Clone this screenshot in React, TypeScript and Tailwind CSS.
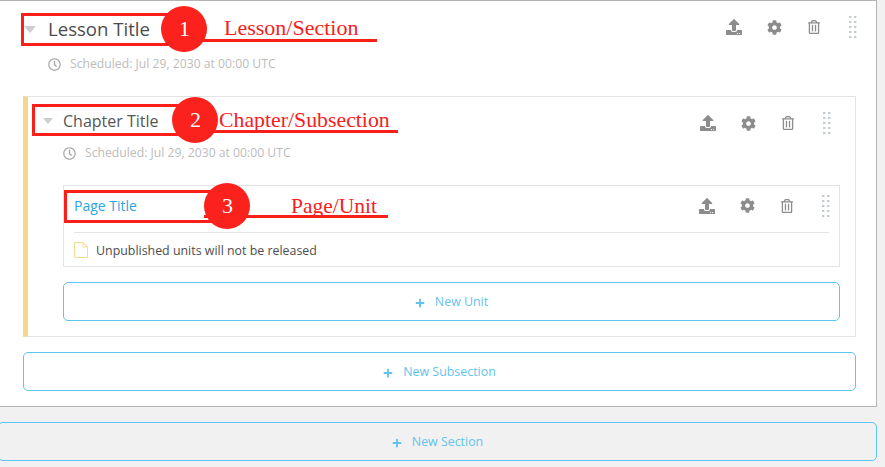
import { FaCog, FaPlus, FaRegClock, FaUpload, FaRegTrashAlt } from "react-icons/fa";

function Dots() {
  return (
    <svg width="8" height="22" viewBox="0 0 8 22" className="block">
      {[0, 5, 10, 15, 20].map((y) => (
        <g key={y} fill="#c3cad4">
          <rect x="0" y={y} width="2.4" height="2" />
          <rect x="5" y={y} width="2.4" height="2" />
        </g>
      ))}
    </svg>
  );
}

function Actions({ className }: { className: string }) {
  return (
    <div className={`flex items-center text-[#8c8c8c] ${className}`}>
      <span className="flex w-10 justify-center"><FaUpload size={16} /></span>
      <span className="flex w-10 justify-center"><FaCog size={15} /></span>
      <span className="flex w-10 justify-center"><FaRegTrashAlt size={14} /></span>
      <span className="ml-[15px] flex w-2 justify-center"><Dots /></span>
    </div>
  );
}

function Caret({ className }: { className: string }) {
  return (
    <svg viewBox="0 0 12 7" className={`block shrink-0 ${className}`}>
      <path d="M0 0H12L6 7Z" fill="#cdcdcd" />
    </svg>
  );
}

function Schedule({ className }: { className: string }) {
  return (
    <div className={`flex items-center text-[12.200px] leading-4 text-[#bcbcbc] ${className}`}>
      <FaRegClock size={13} className="mr-[9px] shrink-0 text-[#a8a8a8]" />
      <span>Scheduled: Jul 29, 2030 at 00:00 UTC</span>
    </div>
  );
}

function AddButton({ label, className }: { label: string; className: string }) {
  return (
    <div className={`flex items-center justify-center gap-[10px] rounded-[5px] border border-solid border-[#5cc6f0]! pt-[2px] text-[12.400px] text-[#62c4ec] ${className}`}>
      <FaPlus size={10} />
      <span>{label}</span>
    </div>
  );
}

function Annotation({ n, box, circle, line, label }: {
  n: string;
  box: string;
  circle: string;
  line: string;
  label: { text: string; cls: string };
}) {
  return (
    <>
      <div className={`absolute border-[3px] border-[#fb1f1a] ${box}`} />
      <div className={`absolute h-[3px] bg-[#fb1f1a] ${line}`} />
      <div className={`absolute flex h-[46px] w-[46px] items-center justify-center rounded-full bg-[#fb211c] pb-[2px] pl-px font-['Liberation_Serif',serif] text-[22px] text-white ${circle}`}>{n}</div>
      <div className={`absolute whitespace-nowrap font-['Liberation_Serif',serif] leading-7 text-[#f5211c] ${label.cls}`}>{label.text}</div>
    </>
  );
}

export default function App() {
  return (
    <div
      className="relative h-[467px] w-[885px] overflow-hidden bg-[#f1f1f1]"
      style={{ fontFamily: '"Open Sans", sans-serif' }}
    >
      <section className="h-[407px] w-[877px] border-y border-r border-[#b4b4b4] bg-white pl-[23px] pr-5">
        <div className="h-[95px] pt-[16px]">
          <div className="flex h-[24px] items-center">
            <Caret className="ml-px mr-[12px] h-[7px] w-3" />
            <h1 className="text-[18.600px] leading-6 text-[#4c4c4c]">Lesson Title</h1>
            <Actions className="ml-auto mr-[-1px] -translate-y-[2px]" />
          </div>
          <Schedule className="ml-[25px] mt-[15px]" />
        </div>

        <div className="h-[241px] border border-l-[5px] border-[#e3e3e3] border-l-[#f6d68d] pl-[35px] pr-[15px]">
          <div className="h-[88px] pt-[12px]">
            <div className="flex h-6 items-center">
              <Caret className="ml-[-20px] mr-[10px] h-[6px] w-[10px]" />
              <h2 className="text-[16px] leading-6 text-[#555555]">Chapter Title</h2>
              <Actions className="ml-auto mr-[9px] translate-y-[2px]" />
            </div>
            <Schedule className="mt-[12px]" />
          </div>

          <div className="h-[82px] border border-[#e3e3e3] px-[10px]">
            <div className="flex h-[47px] items-center border-b border-[#e3e3e3] pb-[7px]">
              <span className="text-[14px] text-[#2ba6e0]">Page Title</span>
              <Actions className="ml-auto mr-[-1px]" />
            </div>
            <div className="flex h-[33px] items-center">
              <svg width="14" height="16" viewBox="0 0 14 16" className="mr-2 block shrink-0">
                <path d="M.5.5H9L13.500 5V15.500H.5Z M9 .5V5H13.500" fill="none" stroke="#f9d88f" />
              </svg>
              <span className="pt-[4px] text-[12.400px] font-medium text-[#4d4d4d]">Unpublished units will not be released</span>
            </div>
          </div>

          <AddButton label="New Unit" className="mt-[15px] h-[39px]" />
        </div>

        <AddButton label="New Subsection" className="mt-[15px] h-[39px]" />
      </section>

      <AddButton label="New Section" className="mt-[15px] ml-[-2px] h-[39px] w-[879px]" />

      <Annotation
        n="1"
        box="left-[21px] top-[13px] h-[33px] w-[150px]"
        circle="left-[161px] top-[6px]"
        line="left-[200px] top-[39px] w-[177px]"
        label={{ text: "Lesson/Section", cls: "left-[224px] top-[14px] text-[22px]" }}
      />
      <Annotation
        n="2"
        box="left-[32px] top-[104px] h-[32px] w-[155px]"
        circle="left-[172px] top-[97px]"
        line="left-[212px] top-[130px] w-[186px]"
        label={{ text: "Chapter/Subsection", cls: "left-[219px] top-[106px] text-[21.800px]" }}
      />
      <Annotation
        n="3"
        box="left-[64px] top-[190px] h-[33px] w-[155px]"
        circle="left-[204px] top-[183px]"
        line="left-[204px] top-[215px] w-[184px]"
        label={{ text: "Page/Unit", cls: "left-[291px] top-[192px] text-[21.500px]" }}
      />
    </div>
  );
}
